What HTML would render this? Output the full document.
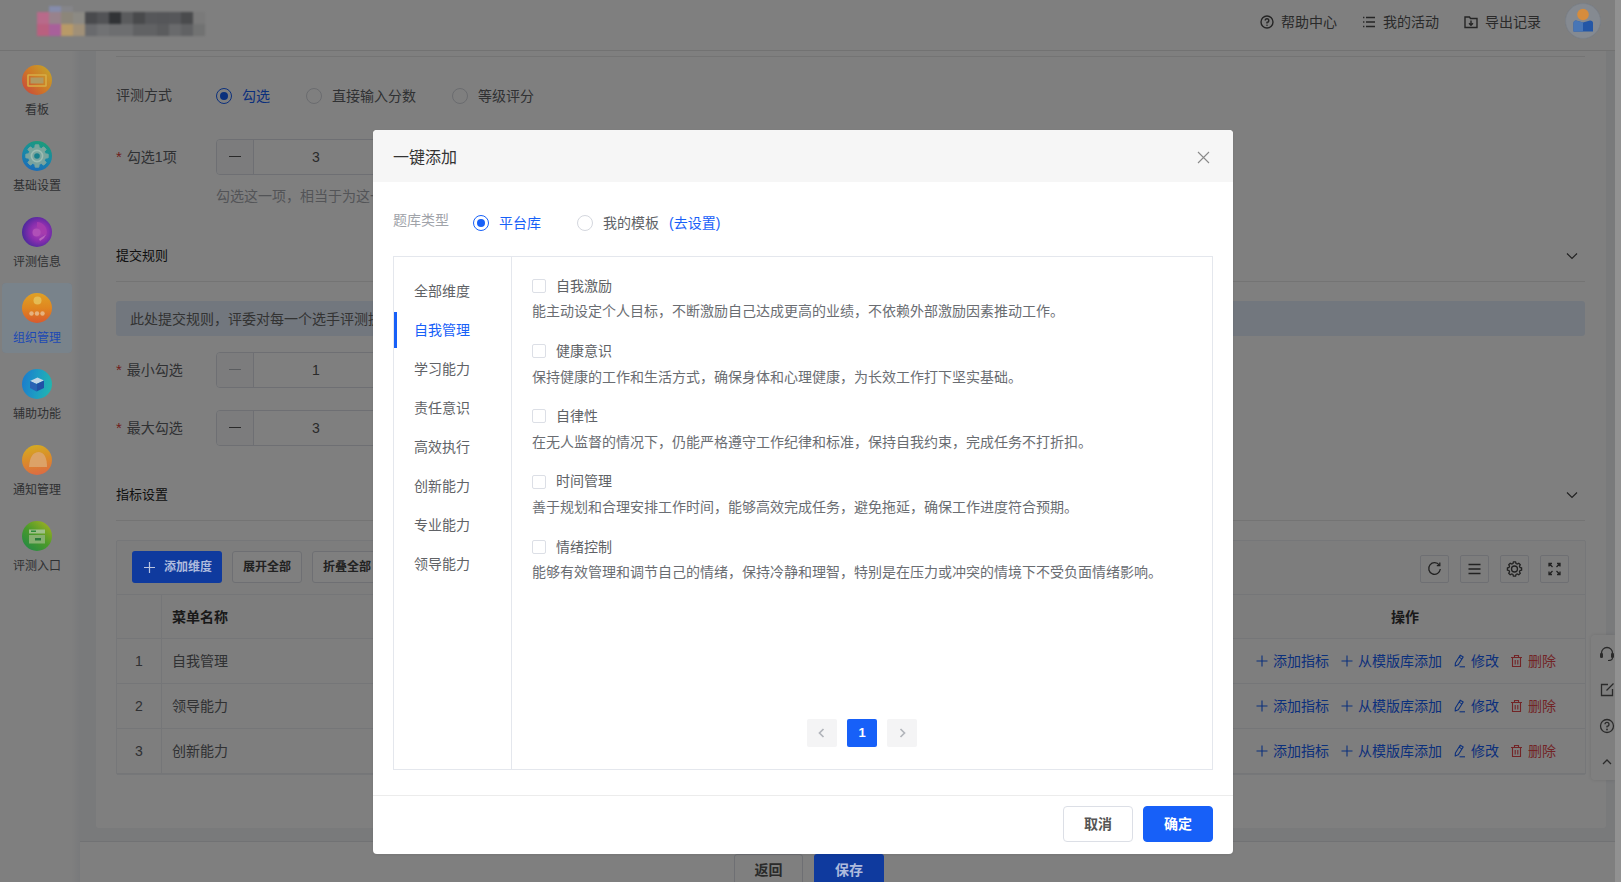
<!DOCTYPE html>
<html lang="zh-CN">
<head>
<meta charset="utf-8">
<title>一键添加</title>
<style>
*{box-sizing:border-box;margin:0;padding:0}
html,body{width:1621px;height:882px;overflow:hidden}
body{position:relative;background:#f2f4f7;font-family:"Liberation Sans","Noto Sans CJK SC",sans-serif;font-size:14px;color:#333;}
.abs{position:absolute}
.t{position:absolute;white-space:nowrap;line-height:20px;height:20px}
/* header */
#hd{position:absolute;left:0;top:0;width:1615px;height:51px;background:#fff;border-bottom:1px solid #e4e4e4}
#hd .nav{position:absolute;top:12px;height:20px;line-height:20px;font-size:14px;color:#555;white-space:nowrap}
#hd svg{position:absolute}
/* sidebar */
#sb{position:absolute;left:0;top:51px;width:80px;height:831px;background:linear-gradient(90deg,#fff 0,#fff 71px,#f2f4f7 80px)}
#sb .it{position:absolute;left:2px;width:70px;height:70px}
#sb .it .ic{position:absolute;left:20px;top:11px;width:30px;height:30px;border-radius:50%}
#sb .it .lb{position:absolute;left:-5px;width:80px;top:46px;text-align:center;font-size:12px;line-height:18px;color:#606266;white-space:nowrap}
#sb .it.on{background:#eaf2fb;border-radius:4px}
#sb .it.on .lb{color:#1760f8}
/* content */
#card{position:absolute;left:96px;top:51px;width:1510px;height:777px;background:#fff;border-radius:0 0 3px 3px}
#foot{position:absolute;left:80px;top:841px;width:1535px;height:41px;background:#fff;border-top:1px solid #e2e4e8}
#scr{position:absolute;left:1615px;top:0;width:6px;height:882px;background:#fff}
.hr{position:absolute;height:1px;background:#e8e8e8}
.lbl{color:#606266}
.req{color:#e23c39}
.num{position:absolute;left:120px;width:300px;height:36px;border:1px solid #dcdfe6;border-radius:4px;background:#fff}
.num .mi{position:absolute;left:0;top:0;width:37px;height:34px;background:#f8f9fb;border-right:1px solid #dcdfe6;border-radius:3px 0 0 3px}
.num .mi i{position:absolute;left:12px;top:16px;width:12px;height:1px;background:#555}
.num .mi.dis i{background:#b5b8bf}
.num .v{position:absolute;left:37px;width:124px;top:7px;text-align:center;line-height:20px;color:#555;font-size:14px}
.radio{position:absolute;width:16px;height:16px;border:1px solid #d4d7de;border-radius:50%;background:#fff}
.radio.on{border-color:#1760f8}
.radio.on:after{content:"";position:absolute;left:3px;top:3px;width:8px;height:8px;border-radius:50%;background:#1760f8}
.btn{position:absolute;height:33px;line-height:31px;border:1px solid #dcdfe6;border-radius:3px;background:#fff;font-size:12px;font-weight:bold;color:#444;text-align:center;white-space:nowrap}
.btn.pri{background:#1760f8;border-color:#1760f8;color:#fff}
.tool{position:absolute;top:555px;width:29px;height:28px;border:1px solid #dcdfe6;border-radius:2px;background:transparent}
.row{position:absolute;left:117px;width:1468px;height:45px;border-bottom:1px solid #ebedf1}
.row .n{position:absolute;left:0;width:44px;top:12px;text-align:center;line-height:20px;color:#606266}
.row .nm{position:absolute;left:55px;top:12px;line-height:20px;color:#606266}
.row .vl{position:absolute;left:44px;top:0;width:1px;height:45px;background:#ebedf1}
.act{position:absolute;top:12px;line-height:20px;font-size:14px;color:#1760f8;white-space:nowrap}
.act.del{color:#e5484d}
/* overlay + modal */
#mask{position:absolute;left:0;top:0;width:1615px;height:882px;background:rgba(0,0,0,.5)}
#scrm{position:absolute;left:1615px;top:0;width:6px;height:882px;background:rgba(0,0,0,.43)}
#dlg{position:absolute;left:373px;top:130px;width:860px;height:724px;background:#fff;border-radius:4px;box-shadow:0 1px 3px rgba(0,0,0,.08)}
#dlg .dh{position:absolute;left:0;top:0;width:860px;height:52px;background:#f6f6f6;border-radius:4px 4px 0 0}
#dlg .dh .tt{position:absolute;left:20px;top:16px;font-size:16px;line-height:24px;color:#333}
#box{position:absolute;left:20px;top:126px;width:820px;height:514px;border:1px solid #e4e7ed}
#box .vd{position:absolute;left:117px;top:0;width:1px;height:512px;background:#e4e7ed}
#box .mi{position:absolute;left:20px;font-size:14px;line-height:20px;color:#606266;white-space:nowrap}
#box .mi.on{color:#1760f8}
#box .bar{position:absolute;left:0;top:55px;width:3px;height:36px;background:#1760f8}
.ck{position:absolute;left:138px;width:14px;height:14px;border:1px solid #dcdfe6;border-radius:2px;background:#fff}
.cl{position:absolute;left:162px;font-size:14px;line-height:20px;color:#606266;white-space:nowrap}
.cd{position:absolute;left:138px;font-size:14px;line-height:20px;color:#6a6d72;white-space:nowrap}
.pg{position:absolute;top:462px;width:30px;height:28px;border-radius:2px;background:#f4f4f5;text-align:center;line-height:28px;font-size:13px;font-weight:bold;color:#fff;font-family:"Liberation Sans",sans-serif}
.pg.on{background:#1760f8}
.dbtn{position:absolute;top:676px;width:70px;height:36px;border-radius:4px;font-size:14px;font-weight:bold;line-height:34px;text-align:center;border:1px solid #dcdfe6;color:#555;background:#fff}
.dbtn.pri{background:#1760f8;border-color:#1760f8;color:#fff}
</style>
</head>
<body>
<div id="hd">
    <svg style="left:1260px;top:15px" width="14" height="14" viewBox="0 0 14 14"><circle cx="7" cy="7" r="6" fill="none" stroke="#4a4a4a" stroke-width="1.4"/><path d="M5.2 5.6 A1.8 1.8 0 1 1 7 7.4 V8.4" fill="none" stroke="#4a4a4a" stroke-width="1.4"/><circle cx="7" cy="10.2" r=".8" fill="#555"/></svg>
  <div class="nav" style="left:1281px">帮助中心</div>
  <svg style="left:1362px;top:15px" width="14" height="14" viewBox="0 0 14 14"><path d="M4 2.5H13M4 7H13M4 11.5H13" stroke="#4a4a4a" stroke-width="1.4"/><path d="M1 2.5H2.4M1 7H2.4M1 11.5H2.4" stroke="#555" stroke-width="1.4"/></svg>
  <div class="nav" style="left:1383px">我的活动</div>
  <svg style="left:1464px;top:15px" width="14" height="14" viewBox="0 0 14 14"><path d="M1 2 H5.5 L6.5 3.5 H13 V12.5 H1 Z" fill="none" stroke="#4a4a4a" stroke-width="1.4"/><path d="M7 5.5 V10 M5 8.2 L7 10.2 L9 8.2" fill="none" stroke="#4a4a4a" stroke-width="1.4"/></svg>
  <div class="nav" style="left:1485px">导出记录</div>
  <!-- avatar -->
  <div class="abs" style="left:1565px;top:3px;width:36px;height:36px;border-radius:50%;background:#e9eef5;border:1px solid #dfe4ec"></div>
  
</div>

<div id="sb">
  <div class="it" style="top:4px"><div class="lb">看板</div></div>
  <div class="it" style="top:80px"><div class="lb">基础设置</div></div>
  <div class="it" style="top:156px"><div class="lb">评测信息</div></div>
  <div class="it on" style="top:232px"></div>
  <div class="it" style="top:308px"><div class="lb">辅助功能</div></div>
  <div class="it" style="top:384px"><div class="lb">通知管理</div></div>
  <div class="it" style="top:460px"><div class="lb">评测入口</div></div>
</div>

<div id="card"></div>
<div class="hr" style="left:116px;top:56px;width:1469px"></div>
<div class="t lbl" style="left:116px;top:85px">评测方式</div>
<div class="radio on" style="left:216px;top:88px"></div><div class="t" style="left:242px;top:86px;color:#1760f8">勾选</div>
<div class="radio" style="left:306px;top:88px"></div><div class="t lbl" style="left:332px;top:86px">直接输入分数</div>
<div class="radio" style="left:452px;top:88px"></div><div class="t lbl" style="left:478px;top:86px">等级评分</div>

<div class="t lbl" style="left:116px;top:147px"><span class="req" style="font-size:15px;margin-right:5px">*</span>勾选1项</div>
<div class="num" style="left:216px;top:139px"><div class="mi"><i></i></div><div class="v">3</div></div>
<div class="t" style="left:216px;top:186px;color:#a6a9af">勾选这一项，相当于为这一</div>

<div class="t" style="left:116px;top:246px;color:#222;font-size:13px">提交规则</div>
<svg class="abs" style="left:1566px;top:251px" width="12" height="10" viewBox="0 0 12 10"><path d="M1 2.500 L6 7.500 L11 2.500" fill="none" stroke="#444" stroke-width="1.2"/></svg>
<div class="hr" style="left:116px;top:281px;width:1469px"></div>
<div class="abs" style="left:116px;top:301px;width:1469px;height:35px;background:#e5effc;border-radius:3px"></div>
<div class="t" style="left:130px;top:309px;color:#666">此处提交规则，评委对每一个选手评测提交</div>

<div class="t lbl" style="left:116px;top:360px"><span class="req" style="font-size:15px;margin-right:5px">*</span>最小勾选</div>
<div class="num" style="left:216px;top:352px"><div class="mi dis"><i></i></div><div class="v">1</div></div>
<div class="t lbl" style="left:116px;top:418px"><span class="req" style="font-size:15px;margin-right:5px">*</span>最大勾选</div>
<div class="num" style="left:216px;top:410px"><div class="mi"><i></i></div><div class="v">3</div></div>

<div class="t" style="left:116px;top:485px;color:#222;font-size:13px">指标设置</div>
<svg class="abs" style="left:1566px;top:490px" width="12" height="10" viewBox="0 0 12 10"><path d="M1 2.500 L6 7.500 L11 2.500" fill="none" stroke="#444" stroke-width="1.2"/></svg>
<div class="hr" style="left:116px;top:520px;width:1469px"></div>

<!-- table wrapper -->
<div class="abs" style="left:116px;top:540px;width:1470px;height:235px;background:#fbfbfb;border:1px solid #eceef2;border-radius:2px"></div>
<div class="btn" style="left:232px;top:551px;width:70px;height:32px;line-height:30px">展开全部</div>
<div class="btn" style="left:312px;top:551px;width:70px;height:32px;line-height:30px">折叠全部</div>
<div class="tool" style="left:1420px"><svg width="27" height="26" viewBox="0 0 27 26"><path d="M18.300 9.200 A5.800 5.800 0 1 0 19.300 13" fill="none" stroke="#444" stroke-width="1.300"/><path d="M15.800 9.600 H18.800 V6.600" fill="none" stroke="#444" stroke-width="1.300"/></svg></div>
<div class="tool" style="left:1460px"><svg width="27" height="26" viewBox="0 0 27 26"><path d="M7.500 8.500H19.500M7.500 13H19.500M7.500 17.500H19.500" stroke="#444" stroke-width="1.300"/></svg></div>
<div class="tool" style="left:1500px"><svg width="27" height="26" viewBox="0 0 27 26"><circle cx="13.500" cy="13" r="3" fill="none" stroke="#444" stroke-width="1.300"/><path d="M12.37 5.89 L14.63 5.89 L15.00 7.50 L16.32 8.05 L17.73 7.18 L19.32 8.77 L18.45 10.18 L19.00 11.50 L20.61 11.87 L20.61 14.13 L19.00 14.50 L18.45 15.82 L19.32 17.23 L17.73 18.82 L16.32 17.95 L15.00 18.50 L14.63 20.11 L12.37 20.11 L12.00 18.50 L10.68 17.95 L9.27 18.82 L7.68 17.23 L8.55 15.82 L8.00 14.50 L6.39 14.13 L6.39 11.87 L8.00 11.50 L8.55 10.18 L7.68 8.77 L9.27 7.18 L10.68 8.05 L12.00 7.50 Z" fill="none" stroke="#444" stroke-width="1.300" stroke-linejoin="round"/></svg></div>
<div class="tool" style="left:1540px"><svg width="27" height="26" viewBox="0 0 27 26"><path d="M8 10.500V7.500H11M16 7.500H19V10.500M19 15.500V18.500H16M11 18.500H8V15.500M8 7.500L11.500 11M19 7.500L15.500 11M19 18.500L15.500 15M8 18.500L11.500 15" fill="none" stroke="#444" stroke-width="1.300"/></svg></div>

<!-- table head -->
<div class="abs" style="left:117px;top:594px;width:1468px;height:45px;background:#fafafa;border-top:1px solid #ebedf1;border-bottom:1px solid #ebedf1"></div>
<div class="abs" style="left:161px;top:595px;width:1px;height:44px;background:#ebedf1"></div>
<div class="t" style="left:172px;top:607px;font-weight:bold;color:#333">菜单名称</div>
<div class="t" style="left:1391px;top:607px;font-weight:bold;color:#333">操作</div>
<div class="row" style="top:639px;background:#fcfcfc"><div class="n">1</div><div class="vl"></div><div class="nm">自我管理</div></div>
<div class="row" style="top:684px;background:#fcfcfc"><div class="n">2</div><div class="vl"></div><div class="nm">领导能力</div></div>
<div class="row" style="top:729px;background:#fcfcfc"><div class="n">3</div><div class="vl"></div><div class="nm">创新能力</div></div>
<div class="act" style="left:1256px;top:651px;padding-left:17px"><svg style="position:absolute;left:0;top:4px" width="12" height="12" viewBox="0 0 12 12"><path d="M6 0.500V11.500M0.500 6H11.500" stroke="#1760f8" stroke-width="1.100"/></svg>添加指标</div>
<div class="act" style="left:1341px;top:651px;padding-left:17px"><svg style="position:absolute;left:0;top:4px" width="12" height="12" viewBox="0 0 12 12"><path d="M6 0.500V11.500M0.500 6H11.500" stroke="#1760f8" stroke-width="1.100"/></svg>从模版库添加</div>
<div class="act" style="left:1453px;top:651px;padding-left:18px"><svg style="position:absolute;left:0;top:3px" width="13" height="14" viewBox="0 0 13 14"><path d="M7.200 1.200 L10.200 3 L5.300 10.800 L2.200 12 L2.400 9 Z" fill="none" stroke="#1760f8" stroke-width="1.100" stroke-linejoin="round"/><path d="M6 3.200 L9 5" stroke="#1760f8" stroke-width="1"/><path d="M6.500 12.800H12" stroke="#1760f8" stroke-width="1.100"/></svg>修改</div>
<div class="act del" style="left:1510px;top:651px;padding-left:18px"><svg style="position:absolute;left:0;top:3px" width="13" height="14" viewBox="0 0 13 14"><path d="M1 3.500H12M4.500 3.500V1.500H8.500V3.500M2.500 3.500V12.500H10.500V3.500M5.200 6V10.500M7.800 6V10.500" fill="none" stroke="#e5484d" stroke-width="1.100"/></svg>删除</div>
<div class="act" style="left:1256px;top:696px;padding-left:17px"><svg style="position:absolute;left:0;top:4px" width="12" height="12" viewBox="0 0 12 12"><path d="M6 0.500V11.500M0.500 6H11.500" stroke="#1760f8" stroke-width="1.100"/></svg>添加指标</div>
<div class="act" style="left:1341px;top:696px;padding-left:17px"><svg style="position:absolute;left:0;top:4px" width="12" height="12" viewBox="0 0 12 12"><path d="M6 0.500V11.500M0.500 6H11.500" stroke="#1760f8" stroke-width="1.100"/></svg>从模版库添加</div>
<div class="act" style="left:1453px;top:696px;padding-left:18px"><svg style="position:absolute;left:0;top:3px" width="13" height="14" viewBox="0 0 13 14"><path d="M7.200 1.200 L10.200 3 L5.300 10.800 L2.200 12 L2.400 9 Z" fill="none" stroke="#1760f8" stroke-width="1.100" stroke-linejoin="round"/><path d="M6 3.200 L9 5" stroke="#1760f8" stroke-width="1"/><path d="M6.500 12.800H12" stroke="#1760f8" stroke-width="1.100"/></svg>修改</div>
<div class="act del" style="left:1510px;top:696px;padding-left:18px"><svg style="position:absolute;left:0;top:3px" width="13" height="14" viewBox="0 0 13 14"><path d="M1 3.500H12M4.500 3.500V1.500H8.500V3.500M2.500 3.500V12.500H10.500V3.500M5.200 6V10.500M7.800 6V10.500" fill="none" stroke="#e5484d" stroke-width="1.100"/></svg>删除</div>
<div class="act" style="left:1256px;top:741px;padding-left:17px"><svg style="position:absolute;left:0;top:4px" width="12" height="12" viewBox="0 0 12 12"><path d="M6 0.500V11.500M0.500 6H11.500" stroke="#1760f8" stroke-width="1.100"/></svg>添加指标</div>
<div class="act" style="left:1341px;top:741px;padding-left:17px"><svg style="position:absolute;left:0;top:4px" width="12" height="12" viewBox="0 0 12 12"><path d="M6 0.500V11.500M0.500 6H11.500" stroke="#1760f8" stroke-width="1.100"/></svg>从模版库添加</div>
<div class="act" style="left:1453px;top:741px;padding-left:18px"><svg style="position:absolute;left:0;top:3px" width="13" height="14" viewBox="0 0 13 14"><path d="M7.200 1.200 L10.200 3 L5.300 10.800 L2.200 12 L2.400 9 Z" fill="none" stroke="#1760f8" stroke-width="1.100" stroke-linejoin="round"/><path d="M6 3.200 L9 5" stroke="#1760f8" stroke-width="1"/><path d="M6.500 12.800H12" stroke="#1760f8" stroke-width="1.100"/></svg>修改</div>
<div class="act del" style="left:1510px;top:741px;padding-left:18px"><svg style="position:absolute;left:0;top:3px" width="13" height="14" viewBox="0 0 13 14"><path d="M1 3.500H12M4.500 3.500V1.500H8.500V3.500M2.500 3.500V12.500H10.500V3.500M5.200 6V10.500M7.800 6V10.500" fill="none" stroke="#e5484d" stroke-width="1.100"/></svg>删除</div>
<!-- right floating toolbar -->
<div class="abs" style="left:1591px;top:635px;width:24px;height:145px;background:#fff;border-radius:4px 0 0 4px;box-shadow:0 0 4px rgba(0,0,0,.12)"></div>
<svg class="abs" style="left:1598px;top:645px" width="18" height="18" viewBox="0 0 18 18"><path d="M3.500 10 V8 A5.500 5.500 0 0 1 14.500 8 V10" fill="none" stroke="#555" stroke-width="1.300"/><rect x="2" y="8" width="3" height="5" rx="1.200" fill="#555"/><rect x="13" y="8" width="3" height="5" rx="1.200" fill="#555"/><path d="M14.500 13 Q14.500 15.500 10 15.500" fill="none" stroke="#555" stroke-width="1.200"/></svg>
<svg class="abs" style="left:1600px;top:682px" width="15" height="15" viewBox="0 0 15 15"><path d="M12.500 7 V13.500 H1.500 V2.500 H8" fill="none" stroke="#555" stroke-width="1.300"/><path d="M6.500 8.500 L13.500 1.500" stroke="#555" stroke-width="1.300"/></svg>
<svg class="abs" style="left:1599px;top:718px" width="16" height="16" viewBox="0 0 16 16"><circle cx="8" cy="8" r="6.500" fill="none" stroke="#555" stroke-width="1.300"/><path d="M6 6.300 A2 2 0 1 1 8 8.300 V9.500" fill="none" stroke="#555" stroke-width="1.300"/><circle cx="8" cy="11.500" r=".9" fill="#555"/></svg>
<svg class="abs" style="left:1602px;top:758px" width="10" height="8" viewBox="0 0 10 8"><path d="M1 6 L5 2 L9 6" fill="none" stroke="#555" stroke-width="1.300"/></svg>

<div id="foot"></div>
<div class="btn" style="left:734px;top:854px;width:69px;height:36px;line-height:31px;font-size:14px;color:#555">返回</div>

<div id="scr"></div>
<div id="mask"></div>
<div id="scrm"></div>
<!-- coloured art above mask -->
<div class="abs" style="left:2px;top:283px;width:70px;height:70px;border-radius:4px;background:#79838b"></div>
<div class="abs" style="left:-3px;top:329px;width:80px;text-align:center;font-size:12px;line-height:18px;color:#1c49b4;white-space:nowrap">组织管理</div>
<div class="abs" style="left:37px;top:5px;width:170px;height:32px;filter:blur(1.1px)"><div class="abs" style="left:12px;top:1px;width:12px;height:6px;background:#858cab"></div><div class="abs" style="left:24px;top:1px;width:12px;height:6px;background:#858589"></div><div class="abs" style="left:0px;top:7px;width:12px;height:12px;background:#b86a8a"></div><div class="abs" style="left:0px;top:19px;width:12px;height:12px;background:#b9607f"></div><div class="abs" style="left:12px;top:7px;width:12px;height:12px;background:#98828c"></div><div class="abs" style="left:12px;top:19px;width:12px;height:12px;background:#a8609a"></div><div class="abs" style="left:24px;top:7px;width:12px;height:12px;background:#8c867a"></div><div class="abs" style="left:24px;top:19px;width:12px;height:12px;background:#b89a68"></div><div class="abs" style="left:36px;top:7px;width:12px;height:12px;background:#8c8a84"></div><div class="abs" style="left:36px;top:19px;width:12px;height:12px;background:#a09078"></div><div class="abs" style="left:48px;top:7px;width:12px;height:12px;background:#494a4d"></div><div class="abs" style="left:48px;top:19px;width:12px;height:12px;background:#696a6d"></div><div class="abs" style="left:60px;top:7px;width:12px;height:12px;background:#525356"></div><div class="abs" style="left:60px;top:19px;width:12px;height:12px;background:#717274"></div><div class="abs" style="left:72px;top:7px;width:12px;height:12px;background:#313336"></div><div class="abs" style="left:72px;top:19px;width:12px;height:12px;background:#6d6e70"></div><div class="abs" style="left:84px;top:7px;width:12px;height:12px;background:#5a5b5d"></div><div class="abs" style="left:84px;top:19px;width:12px;height:12px;background:#6d6e70"></div><div class="abs" style="left:96px;top:7px;width:12px;height:12px;background:#494a4c"></div><div class="abs" style="left:96px;top:19px;width:12px;height:12px;background:#616264"></div><div class="abs" style="left:108px;top:7px;width:12px;height:12px;background:#56575a"></div><div class="abs" style="left:108px;top:19px;width:12px;height:12px;background:#616264"></div><div class="abs" style="left:120px;top:7px;width:12px;height:12px;background:#555659"></div><div class="abs" style="left:120px;top:19px;width:12px;height:12px;background:#5b5c5e"></div><div class="abs" style="left:132px;top:7px;width:12px;height:12px;background:#56575a"></div><div class="abs" style="left:132px;top:19px;width:12px;height:12px;background:#696a6c"></div><div class="abs" style="left:144px;top:7px;width:12px;height:12px;background:#4a4b4d"></div><div class="abs" style="left:144px;top:19px;width:12px;height:12px;background:#616264"></div><div class="abs" style="left:156px;top:7px;width:12px;height:12px;background:#7a7a7a"></div><div class="abs" style="left:156px;top:19px;width:12px;height:12px;background:#717272"></div></div>
<div class="abs" style="left:22px;top:64.5px;width:30px;height:30px;border-radius:50%;background:linear-gradient(50deg,#c9473c 5%,#cf7a26 50%,#c4a62a 95%);filter:blur(.4px)"><svg width="30" height="30" viewBox="0 0 30 30"><rect x="6" y="10" width="18" height="11" rx=".5" fill="none" stroke="#d6ad45" stroke-width="1.6"/><rect x="8.500" y="12.500" width="13" height="6" fill="#b09a62"/></svg></div><div class="abs" style="left:22px;top:140.5px;width:30px;height:30px;border-radius:50%;background:linear-gradient(200deg,#1c9c78 10%,#1888a8 50%,#1a68bc 95%);filter:blur(.4px)"><svg width="30" height="30" viewBox="0 0 30 30"><path d="M13.23 3.84 L16.77 3.84 L17.20 6.69 L19.32 7.56 L21.64 5.86 L24.14 8.36 L22.44 10.68 L23.31 12.80 L26.16 13.23 L26.16 16.77 L23.31 17.20 L22.44 19.32 L24.14 21.64 L21.64 24.14 L19.32 22.44 L17.20 23.31 L16.77 26.16 L13.23 26.16 L12.80 23.31 L10.68 22.44 L8.36 24.14 L5.86 21.64 L7.56 19.32 L6.69 17.20 L3.84 16.77 L3.84 13.23 L6.69 12.80 L7.56 10.68 L5.86 8.36 L8.36 5.86 L10.68 7.56 L12.80 6.69 Z" fill="#84a89e" opacity=".9" stroke="#84a89e" stroke-width="1" stroke-linejoin="round"/><circle cx="15" cy="15" r="5.600" fill="none" stroke="#9dbcb2" stroke-width="1.600"/><circle cx="15" cy="15" r="2.800" fill="#17808c"/></svg></div><div class="abs" style="left:22px;top:216.5px;width:30px;height:30px;border-radius:50%;background:radial-gradient(circle at 58% 50%,#b044b2 0,#8a2eae 40%,#43289a 80%);filter:blur(.4px)"><svg width="30" height="30" viewBox="0 0 30 30"><path d="M15 5 A10 10 0 0 1 24 19 L19 16.500 A4.500 4.500 0 0 0 15 10.500 Z" fill="#a63cae" opacity=".9"/><circle cx="14.500" cy="15.500" r="4" fill="#b050b8"/><path d="M17 22 L24 17.500 L22 21 L18 24 Z" fill="#c070c0" opacity=".8"/></svg></div><div class="abs" style="left:22px;top:292.5px;width:30px;height:30px;border-radius:50%;background:linear-gradient(180deg,#dfa126 0,#e0861f 50%,#d95a2e 100%);filter:blur(.4px)"><svg width="30" height="30" viewBox="0 0 30 30"><circle cx="15.500" cy="7.500" r="4" fill="#e6c05a" opacity=".9"/><circle cx="9.500" cy="20.500" r="2.200" fill="#e6b27e"/><circle cx="15" cy="20.500" r="2.200" fill="#e6b27e"/><circle cx="20.500" cy="20.500" r="2.200" fill="#e6b27e"/></svg></div><div class="abs" style="left:22px;top:368.5px;width:30px;height:30px;border-radius:50%;background:linear-gradient(100deg,#1b7ccc 5%,#1d9cc4 50%,#22b6ae 95%);filter:blur(.4px)"><svg width="30" height="30" viewBox="0 0 30 30"><path d="M8 12 L15.500 8.500 L22 11.500 L14.500 15 Z" fill="#c3d6e6"/><path d="M8 12 V19 L14.500 22.500 V15 Z" fill="#2a62b4"/><path d="M22 11.500 V19 L14.500 22.500 V15 Z" fill="#2150a6"/></svg></div><div class="abs" style="left:22px;top:444.5px;width:30px;height:30px;border-radius:50%;background:linear-gradient(170deg,#d4ab22 5%,#db8a2a 50%,#dc6a44 95%);filter:blur(.4px)"><svg width="30" height="30" viewBox="0 0 30 30"><path d="M7 22 Q8 7 17 7 Q25 8 25 22 Z" fill="#dba56e" opacity=".9"/></svg></div><div class="abs" style="left:22px;top:520.5px;width:30px;height:30px;border-radius:50%;background:linear-gradient(40deg,#258a44 10%,#4a9a2a 50%,#a4b222 95%);filter:blur(.4px)"><svg width="30" height="30" viewBox="0 0 30 30"><rect x="7" y="8.500" width="16" height="4" fill="#9fc08a"/><rect x="9" y="9.500" width="5" height="1.500" fill="#2e8a3a"/><rect x="7" y="14" width="16" height="8.500" fill="#86b070"/><rect x="13" y="17" width="6" height="2.500" fill="#2a7a3a"/></svg></div>
<div class="abs" style="left:1565px;top:3px;width:36px;height:36px;border-radius:50%;background:#858a91;border:1px solid #7d8289"></div>
<svg class="abs" style="left:1565px;top:3px;filter:blur(.4px)" width="36" height="36" viewBox="0 0 36 36"><circle cx="18" cy="11.500" r="5.800" fill="#d68c3c"/><path d="M8.500 20 Q8.500 17.500 11 17.500 L18 19.500 L25 17.500 Q28 17.500 28 20 V28.500 H8.500 Z" fill="#2356a6"/><path d="M8.500 20 Q8.500 17.500 11 17.500 L18 19.500 V28.500 H8.500 Z" fill="#4876b6"/></svg>
<div class="abs" style="left:132px;top:551px;width:90px;height:32px;border-radius:3px;background:#0f3a9e"></div>
<svg class="abs" style="left:144px;top:562px" width="11" height="11" viewBox="0 0 11 11"><path d="M5.500 0V11M0 5.500H11" stroke="#b9c4e0" stroke-width="1.200"/></svg>
<div class="abs" style="left:164px;top:552px;line-height:30px;font-size:12px;font-weight:bold;color:#aebbdd;white-space:nowrap">添加维度</div>
<div class="abs" style="left:814px;top:854px;width:70px;height:28px;border-radius:3px 3px 0 0;background:#0f3a9e"></div>
<div class="abs" style="left:814px;top:855px;width:70px;text-align:center;line-height:31px;font-size:14px;font-weight:bold;color:#aebbdd;white-space:nowrap">保存</div>
<div id="dlg">
  <div class="dh"><div class="tt">一键添加</div>
    <svg class="abs" style="left:824px;top:21px" width="13" height="13" viewBox="0 0 13 13"><path d="M1 1 L12 12 M12 1 L1 12" stroke="#8a8a8a" stroke-width="1.1" fill="none"/></svg>
  </div>
  <div class="t" style="left:20px;top:80px;color:#a0a3a9;font-size:14px">题库类型</div>
  <div class="radio on" style="left:100px;top:85px"></div>
  <div class="t" style="left:126px;top:83px;color:#1760f8">平台库</div>
  <div class="radio" style="left:204px;top:85px"></div>
  <div class="t" style="left:230px;top:83px;color:#606266">我的模板</div>
  <div class="t" style="left:296px;top:83px;color:#1760f8">(去设置)</div>
  <div id="box">
    <div class="vd"></div>
    <div class="bar"></div>
    <div class="mi" style="top:24px">全部维度</div>
    <div class="mi on" style="top:63px">自我管理</div>
    <div class="mi" style="top:102px">学习能力</div>
    <div class="mi" style="top:141px">责任意识</div>
    <div class="mi" style="top:180px">高效执行</div>
    <div class="mi" style="top:219px">创新能力</div>
    <div class="mi" style="top:258px">专业能力</div>
    <div class="mi" style="top:297px">领导能力</div>

    <div class="ck" style="top:22px"></div><div class="cl" style="top:19px">自我激励</div>
    <div class="cd" style="top:44px">能主动设定个人目标，不断激励自己达成更高的业绩，不依赖外部激励因素推动工作。</div>
    <div class="ck" style="top:87px"></div><div class="cl" style="top:84px">健康意识</div>
    <div class="cd" style="top:110px">保持健康的工作和生活方式，确保身体和心理健康，为长效工作打下坚实基础。</div>
    <div class="ck" style="top:152px"></div><div class="cl" style="top:149px">自律性</div>
    <div class="cd" style="top:175px">在无人监督的情况下，仍能严格遵守工作纪律和标准，保持自我约束，完成任务不打折扣。</div>
    <div class="ck" style="top:218px"></div><div class="cl" style="top:214px">时间管理</div>
    <div class="cd" style="top:240px">善于规划和合理安排工作时间，能够高效完成任务，避免拖延，确保工作进度符合预期。</div>
    <div class="ck" style="top:283px"></div><div class="cl" style="top:280px">情绪控制</div>
    <div class="cd" style="top:305px">能够有效管理和调节自己的情绪，保持冷静和理智，特别是在压力或冲突的情境下不受负面情绪影响。</div>

    <div class="pg" style="left:413px"><svg width="30" height="28" viewBox="0 0 30 28"><path d="M16.5 10 L12.5 14 L16.5 18" stroke="#b1b4ba" stroke-width="1.7" fill="none"/></svg></div>
    <div class="pg on" style="left:453px">1</div>
    <div class="pg" style="left:493px"><svg width="30" height="28" viewBox="0 0 30 28"><path d="M13.5 10 L17.5 14 L13.5 18" stroke="#b1b4ba" stroke-width="1.7" fill="none"/></svg></div>
  </div>
  <div class="hr" style="left:0;top:665px;width:860px;background:#ececec"></div>
  <div class="dbtn" style="left:690px">取消</div>
  <div class="dbtn pri" style="left:770px">确定</div>
</div>

</body>
</html>
